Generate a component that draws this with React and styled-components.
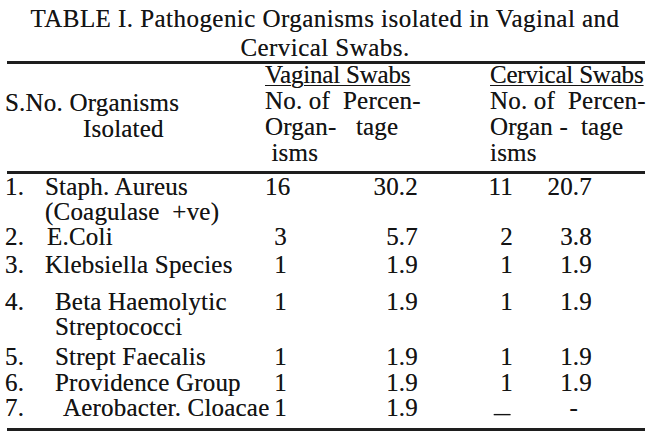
import React from "react";
import styled, { createGlobalStyle } from "styled-components";

const GlobalStyle = createGlobalStyle`
  html, body {
    margin: 0;
    padding: 0;
    background: #fff;
  }
  body {
    font-family: "Liberation Serif", "Times New Roman", serif;
    color: #141414;
  }
`;

const Page = styled.div`
  width: 650px;
  height: 440px;
  box-sizing: border-box;
  padding: 4px 5px 0 5px;
  font-size: 25px;
  letter-spacing: 0.2px;
  text-shadow: 0 0 0.5px rgba(0, 0, 0, 0.55);
  overflow: hidden;
`;

const Caption = styled.div`
  text-align: center;
  line-height: 29px;
  letter-spacing: 0.45px;
`;

const Rule = styled.div`
  height: ${(p) => p.$weight || 2}px;
  background: #1e1e1e;
  margin: ${(p) => p.$space || "0"};
`;

const Head = styled.div`
  display: grid;
  grid-template-columns: 260px 225px 1fr;
  line-height: 26px;
  margin-top: -2px;
`;

const HeadLeft = styled.div`
  padding-top: 28px;
  white-space: pre;
`;

const Indent = styled.div`
  padding-left: ${(p) => p.$by}px;
`;

const Group = styled.div`
  white-space: pre;
`;

const GroupTitle = styled.div`
  text-decoration: underline;
  text-underline-offset: 2px;
  text-decoration-thickness: 1px;
  letter-spacing: -0.2px;
`;

const Body = styled.div`
  line-height: 25px;
`;

const Row = styled.div`
  display: grid;
  grid-template-columns: 40px 220px 22px 131px 95px 79px;
  margin-top: ${(p) => p.$mt || 0}px;
  white-space: nowrap;
`;

const Num = styled.div`
  text-align: right;
  padding-right: ${(p) => p.$nudge || 0}px;
`;

const Label = styled.div`
  padding-left: ${(p) => p.$indent || 0}px;
  white-space: pre;
`;

const Dash = styled.span`
  display: inline-block;
  transform: scaleX(1.3);
  vertical-align: -5px;
`;

const rows = [
  { no: "1.", name: ["Staph. Aureus", "(Coagulase  +ve)"], indent: 0, mt: 0, v: ["16", "30.2"], c: ["11", "20.7"] },
  { no: "2.", name: ["E.Coli"], indent: 2, mt: 0, v: ["3", "5.7"], c: ["2", "3.8"] },
  { no: "3.", name: ["Klebsiella Species"], indent: 0, mt: 3, v: ["1", "1.9"], c: ["1", "1.9"] },
  { no: "4.", name: ["Beta Haemolytic", "Streptococci"], indent: 10, sub: 5, mt: 12, v: ["1", "1.9"], c: ["1", "1.9"], cn: -5 },
  { no: "5.", name: ["Strept Faecalis"], indent: 10, mt: 5, v: ["1", "1.9"], c: ["1", "1.9"] },
  { no: "6.", name: ["Providence Group"], indent: 10, mt: 1, v: ["1", "1.9"], c: ["1", "1.9"] },
  { no: "7.", name: ["Aerobacter. Cloacae"], indent: 18, mt: 0, v: ["1", "1.9"], c: [<Dash key="d">{"\u2013"}</Dash>, "-"], cn: 14, dn: 4 },
];

export default function App() {
  return (
    <>
      <GlobalStyle />
      <Page>
        <Caption>
          TABLE I. Pathogenic Organisms isolated in Vaginal and
          <br />
          Cervical Swabs.
        </Caption>
        <Rule $weight={3} $space="-1px 0 0 2px" />
        <Head>
          <HeadLeft>
            S.No. Organisms
            <Indent $by={78}>Isolated</Indent>
          </HeadLeft>
          <Group>
            <GroupTitle>Vaginal Swabs</GroupTitle>
            <div>No. of  Percen-</div>
            <div>Organ-   tage</div>
            <div> isms</div>
          </Group>
          <Group>
            <GroupTitle>Cervical Swabs</GroupTitle>
            <div>No. of  Percen-</div>
            <div>Organ -  tage</div>
            <div>isms</div>
          </Group>
        </Head>
        <Rule $weight={3} $space="5px 0 0 2px" />
        <Body>
          {rows.map((r) => (
            <Row key={r.no} $mt={r.mt}>
              <div>{r.no}</div>
              <Label $indent={r.indent}>
                {r.name.map((n, i) => (
                  <Indent key={n} $by={i > 0 && r.sub ? r.sub - r.indent : 0}>
                    {n}
                  </Indent>
                ))}
              </Label>
              <Num>{r.v[0]}</Num>
              <Num>{r.v[1]}</Num>
              <Num $nudge={r.dn}>{r.c[0]}</Num>
              <Num $nudge={r.cn}>{r.c[1]}</Num>
            </Row>
          ))}
        </Body>
        <Rule $weight={3} $space="3px 0 0 2px" />
      </Page>
    </>
  );
}
